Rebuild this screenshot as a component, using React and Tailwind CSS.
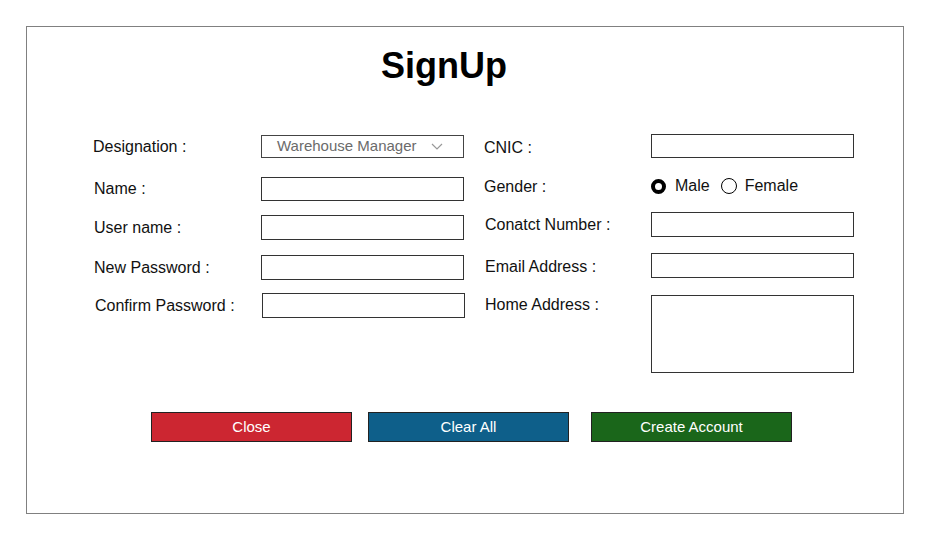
import React, { useState } from "react";

const Field = ({ label, className = "", labelCls = "", children }) => (
  <div className={`flex items-center ${className}`}>
    <span className={`w-[168px] shrink-0 ${labelCls}`}>{label}</span>
    {children}
  </div>
);

const inputCls =
  "w-[203px] h-full border border-[#333] bg-white outline-none px-1 text-[14px]";

export default function App() {
  const [gender, setGender] = useState("male");

  return (
    <div
      className="w-[930px] h-[540px] bg-white pt-[26px] pl-[26px] text-[16px] text-[#111]"
      style={{ fontFamily: '"Liberation Sans", Arial, sans-serif' }}
    >
      <div className="w-[878px] h-[488px] border border-[#808080] flex flex-col">
        <h1 className="mt-[21px] h-[35px] text-[36px] leading-none font-bold text-black text-center pr-[42px]">
          SignUp
        </h1>

        <div className="flex items-start mt-[51px]">
          {/* left column */}
          <div className="ml-[66px] w-[372px] flex flex-col">
            <Field label="Designation :" className="mt-[1px] h-[23px]">
              <div className="w-[203px] h-full border border-[#444] flex items-center justify-between pl-[15px] pr-[20px] text-[15px] text-[#6b6b6b]">
                <span>Warehouse Manager</span>
                <svg width="12" height="7" viewBox="0 0 12 7">
                  <polyline
                    points="1,1 6,6 11,1"
                    fill="none"
                    stroke="#999"
                    strokeWidth="1.2"
                  />
                </svg>
              </div>
            </Field>
            <Field label="Name :" className="mt-[19px] h-[24px]" labelCls="pl-[1px]">
              <input className={inputCls} />
            </Field>
            <Field label="User name :" className="mt-[14px] h-[25px]" labelCls="pl-[1px]">
              <input className={inputCls} />
            </Field>
            <Field label="New Password :" className="mt-[15px] h-[25px]" labelCls="pl-[1px]">
              <input className={inputCls} />
            </Field>
            <Field
              label="Confirm Password :"
              className="mt-[13px] h-[25px] pl-[1px]"
              labelCls="pl-[1px]"
            >
              <input className={inputCls} />
            </Field>
          </div>

          {/* right column */}
          <div className="ml-[19px] flex flex-col">
            <div className="flex items-center h-[24px]">
              <span className="w-[167px] shrink-0 pt-[3px]">CNIC :</span>
              <input className={inputCls} />
            </div>
            <div className="flex items-center mt-[16px] h-[24px]">
              <span className="w-[167px] shrink-0 pt-[1px]">Gender :</span>
              <label
                className="flex items-center cursor-pointer"
                onClick={() => setGender("male")}
              >
                <span
                  className={`w-[15px] h-[15px] rounded-full border-black ${
                    gender === "male" ? "border-[4px]" : "border"
                  }`}
                />
                <span className="ml-[9px]">Male</span>
              </label>
              <label
                className="flex items-center ml-[11px] cursor-pointer"
                onClick={() => setGender("female")}
              >
                <span
                  className={`w-[16px] h-[16px] rounded-full border-black ${
                    gender === "female" ? "border-[4px]" : "border"
                  }`}
                />
                <span className="ml-[8px]">Female</span>
              </label>
            </div>
            <div className="flex items-center mt-[14px] h-[25px]">
              <span className="w-[167px] shrink-0 pl-[1px] pt-[1px]">Conatct Number :</span>
              <input className={inputCls} />
            </div>
            <div className="flex items-center mt-[16px] h-[25px]">
              <span className="w-[167px] shrink-0 pl-[1px] pt-[2px]">Email Address :</span>
              <input className={inputCls} />
            </div>
            <div className="flex items-start mt-[17px] h-[78px]">
              <span className="w-[167px] shrink-0 pl-[1px] -mt-[2px]">Home Address :</span>
              <textarea className="w-[203px] h-full border border-[#333] resize-none outline-none px-1 text-[14px]" />
            </div>
          </div>
        </div>

        <div className="flex mt-[39px] text-[15px] text-white">
          <button className="ml-[124px] w-[201px] h-[30px] bg-[#cc2631] border border-[#222]">
            Close
          </button>
          <button className="ml-[16px] w-[201px] h-[30px] bg-[#0e5f8a] border border-[#222]">
            Clear All
          </button>
          <button className="ml-[22px] w-[201px] h-[30px] bg-[#1a661a] border border-[#222]">
            Create Account
          </button>
        </div>
      </div>
    </div>
  );
}
